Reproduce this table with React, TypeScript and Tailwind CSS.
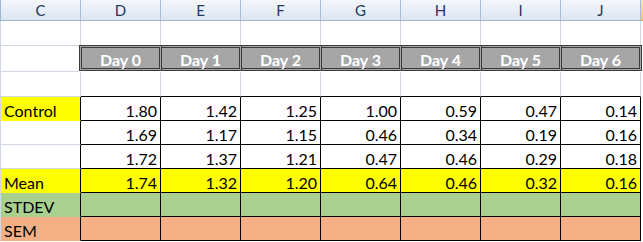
import React from "react";

const cols = ["C", "D", "E", "F", "G", "H", "I", "J"];
const days = ["Day 0", "Day 1", "Day 2", "Day 3", "Day 4", "Day 5", "Day 6"];

type Row = { label: string; values: string[]; kind: "control" | "plain" | "mean" | "stdev" | "sem" };

const rows: Row[] = [
  { label: "Control", kind: "control", values: ["1.80", "1.42", "1.25", "1.00", "0.59", "0.47", "0.14"] },
  { label: "", kind: "plain", values: ["1.69", "1.17", "1.15", "0.46", "0.34", "0.19", "0.16"] },
  { label: "", kind: "plain", values: ["1.72", "1.37", "1.21", "0.47", "0.46", "0.29", "0.18"] },
  { label: "Mean", kind: "mean", values: ["1.74", "1.32", "1.20", "0.64", "0.46", "0.32", "0.16"] },
  { label: "STDEV", kind: "stdev", values: ["", "", "", "", "", "", ""] },
  { label: "SEM", kind: "sem", values: ["", "", "", "", "", "", ""] },
];

const labelCls: Record<Row["kind"], string> = {
  control: "bg-[#ffff00] border-b-[#ffff00]",
  plain: "bg-white border-b-[#d0d7e5]",
  mean: "bg-[#ffff00] border-b-[#ffff00]",
  stdev: "bg-[#a9d08e] border-b-[#a9d08e]",
  sem: "bg-[#f4b084] border-b-[#f4b084]",
};

const valueCls: Record<Row["kind"], string> = {
  control: "bg-white",
  plain: "bg-white",
  mean: "bg-[#ffff00]",
  stdev: "bg-[#a9d08e]",
  sem: "bg-[#f4b084]",
};

export default function App() {
  return (
    <div className="w-[643px] h-[242px] overflow-hidden bg-white font-['Lato',sans-serif] text-black">
      {/* Column header */}
      <div className="flex h-[21px]">
        <div className="flex border-l border-[#9eb6ce]">
          {cols.map((c) => (
            <div
              key={c}
              className="w-[80px] h-[21px] border-r border-b border-r-[#a9bfd6] border-b-[#9eb6ce] bg-linear-to-b from-[#f4f7fc] to-[#dce5f1] flex items-center justify-center text-[15px] leading-[18px] text-[#213a5c]"
            >
              {c}
            </div>
          ))}
        </div>
        <div className="w-[2px] h-[21px] border-b border-[#f29536] bg-linear-to-b from-[#fbe3b0] to-[#f5c36a]" />
      </div>

      <div className="border-l border-[#d0d7e5] w-[641px]">
        {/* Row 1 */}
        <div className="flex">
          {cols.map((c) => (
            <div key={c} className="w-[80px] h-[25px] border-r border-b border-[#d0d7e5]" />
          ))}
        </div>

        {/* Row 2 - Day header */}
        <div className="flex items-start">
          <div className="w-[78px] h-[26px] border-b border-[#d0d7e5] shrink-0" />
          <div className="flex -mt-px shrink-0">
            {days.map((d, i) => (
              <div
                key={d}
                className={
                  i === 0
                    ? "w-[83px] h-[26px] border-[3px] border-double border-[#3a3a3a] bg-[#a6a6a6] flex items-center justify-center pt-[3px] text-white font-bold text-[16px] leading-[19px]"
                    : "w-[80px] h-[26px] border-[3px] border-l-0 border-double border-[#3a3a3a] bg-[#a6a6a6] flex items-center justify-center pt-[3px] text-white font-bold text-[16px] leading-[19px]"
                }
              >
                {d}
              </div>
            ))}
          </div>
        </div>

        {/* Row 3 */}
        <div className="flex">
          <div className="w-[80px] h-[25px] border-r border-b border-[#d0d7e5]" />
          {days.map((d) => (
            <div key={d} className="w-[80px] h-[25px] border-r border-b border-r-[#d0d7e5] border-b-black" />
          ))}
        </div>

        {/* Data rows */}
        {rows.map((r, ri) => (
          <div key={ri} className="flex">
            <div
              className={`w-[80px] h-[24px] border-r border-b border-r-black ${labelCls[r.kind]} flex items-end pl-[3px] text-[16px] leading-[19px]`}
            >
              {r.label}
            </div>
            {r.values.map((v, vi) => (
              <div
                key={vi}
                className={`w-[80px] h-[24px] border-r border-b border-black ${valueCls[r.kind]} flex items-end justify-end pr-[3px] text-[16px] leading-[19px]`}
              >
                {v}
              </div>
            ))}
          </div>
        ))}
      </div>
    </div>
  );
}
